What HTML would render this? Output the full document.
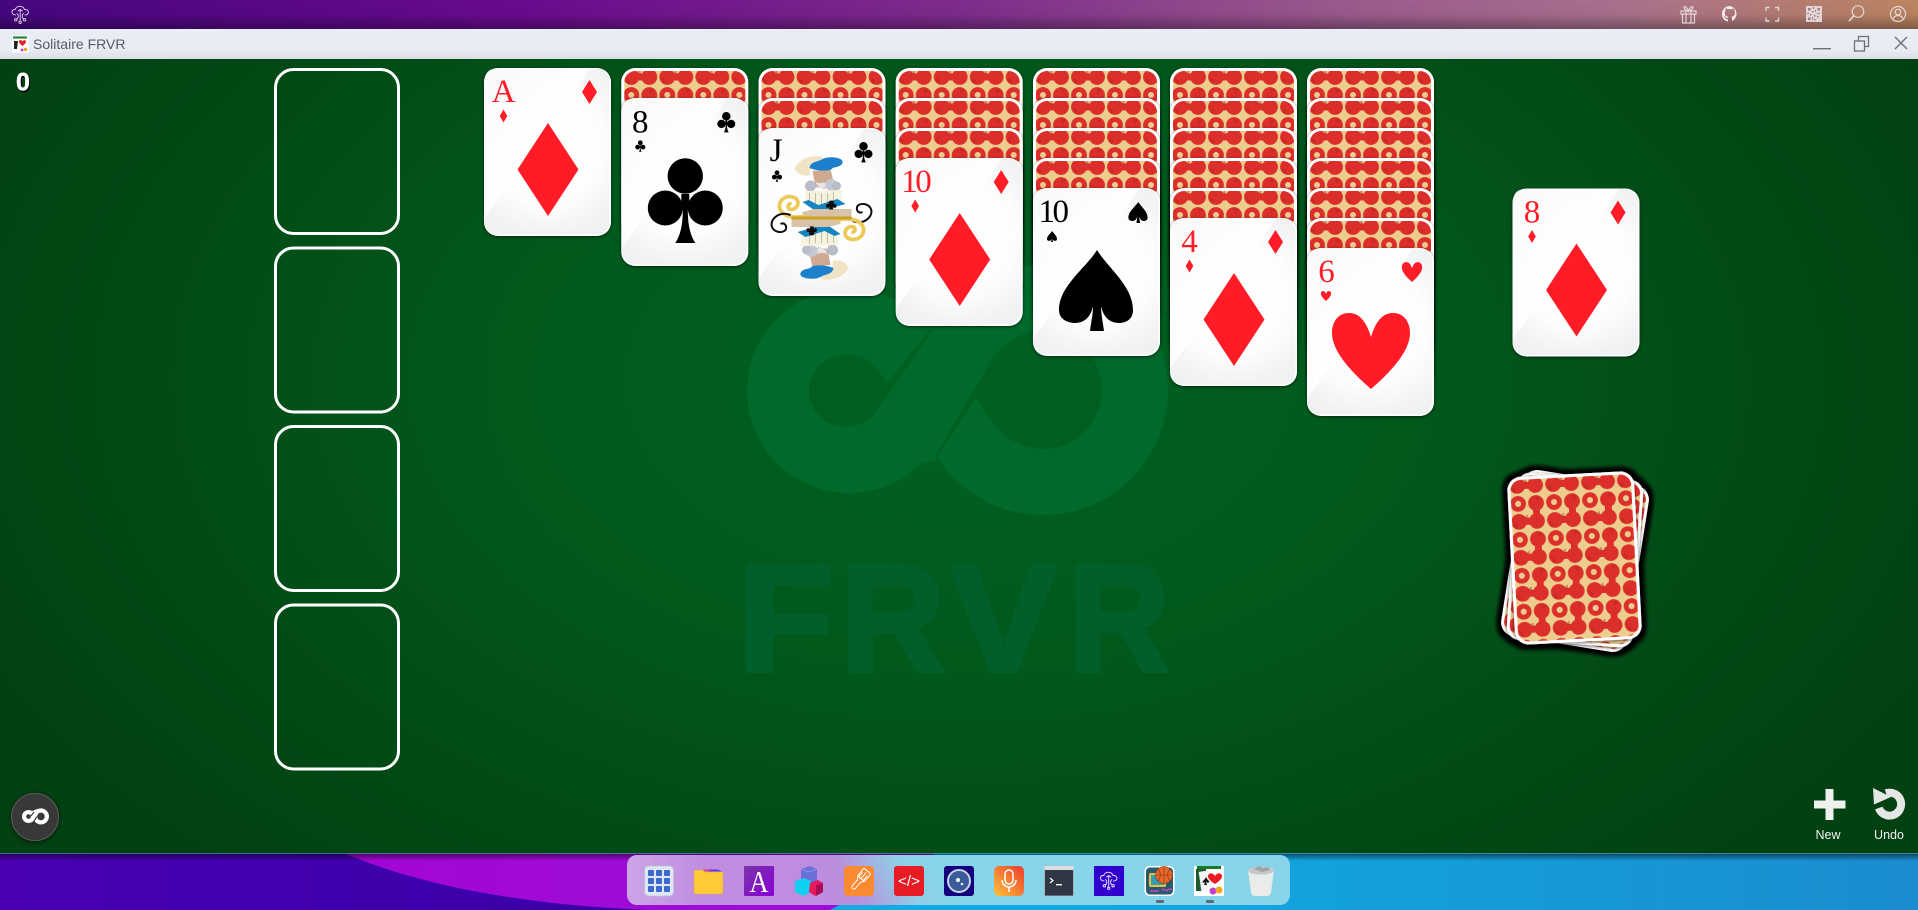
<!DOCTYPE html>
<html><head><meta charset="utf-8"><title>Solitaire FRVR</title>
<style>html,body{margin:0;padding:0;background:#000;overflow:hidden}svg{display:block}text{font-family:"Liberation Sans",sans-serif}</style>
</head><body>
<svg xmlns="http://www.w3.org/2000/svg" width="1918" height="910" viewBox="0 0 1918 910">
<defs>
<radialGradient id="bg" gradientUnits="userSpaceOnUse" cx="960" cy="380" r="1100" gradientTransform="translate(960 380) scale(1 .62) translate(-960 -380)">
<stop offset="0" stop-color="#006123"/><stop offset=".42" stop-color="#01591c"/><stop offset=".72" stop-color="#024b16"/><stop offset="1" stop-color="#034012"/>
</radialGradient>
<linearGradient id="top" x1="0" x2="1" y1="0" y2="0"><stop offset="0" stop-color="#46067f"/><stop offset=".27" stop-color="#6a0a8e"/><stop offset=".5" stop-color="#7e2c8c"/><stop offset=".7" stop-color="#9a5a8c"/><stop offset=".84" stop-color="#a8708e"/><stop offset="1" stop-color="#bc8560"/></linearGradient>
<linearGradient id="topd" x1="0" x2="0" y1="0" y2="1"><stop offset="0" stop-color="#000" stop-opacity="0"/><stop offset=".5" stop-color="#000" stop-opacity=".03"/><stop offset="1" stop-color="#000" stop-opacity=".32"/></linearGradient>
<linearGradient id="title" x1="0" x2="0" y1="0" y2="1"><stop offset="0" stop-color="#e9edf5"/><stop offset=".7" stop-color="#e7ebf3"/><stop offset="1" stop-color="#dcdfe6"/></linearGradient>
<linearGradient id="shd" x1="0" x2="0" y1="0" y2="1"><stop offset="0" stop-color="#000" stop-opacity=".5"/><stop offset="1" stop-color="#000" stop-opacity="0"/></linearGradient>
<linearGradient id="wl" x1="0" x2="1" y1="0" y2="0"><stop offset="0" stop-color="#4a00b2"/><stop offset="1" stop-color="#3800a8"/></linearGradient>
<linearGradient id="wm" x1="0" x2="1" y1="0" y2="0"><stop offset="0" stop-color="#a800d4"/><stop offset="1" stop-color="#9a10d8"/></linearGradient>
<linearGradient id="wr" x1="0" x2="1" y1="0" y2="0"><stop offset="0" stop-color="#08b8e8"/><stop offset=".6" stop-color="#10a8e0"/><stop offset="1" stop-color="#1b8ccf"/></linearGradient>
<linearGradient id="dock" gradientUnits="userSpaceOnUse" x1="830" y1="905" x2="925" y2="855"><stop offset="0" stop-color="#bf8ce0"/><stop offset=".25" stop-color="#b98fdc"/><stop offset=".75" stop-color="#8fcfe6"/><stop offset="1" stop-color="#88d4ea"/></linearGradient>
<linearGradient id="dockl" x1="0" x2="1" y1="0" y2="0"><stop offset="0" stop-color="#fff" stop-opacity=".22"/><stop offset=".12" stop-color="#fff" stop-opacity="0"/></linearGradient>
<radialGradient id="fg" gradientUnits="userSpaceOnUse" cx="62" cy="78" r="105"><stop offset="0" stop-color="#fff"/><stop offset=".55" stop-color="#fdfdfd"/><stop offset=".85" stop-color="#f1f2f4"/><stop offset="1" stop-color="#eef0f2"/></radialGradient>
<linearGradient id="gl" x1="0" x2="1" y1="0" y2="1"><stop offset="0" stop-color="#fafafa"/><stop offset=".5" stop-color="#fff"/></linearGradient>
<linearGradient id="mic" x1="0" x2="1" y1="1" y2="0"><stop offset="0" stop-color="#fdc23a"/><stop offset="1" stop-color="#ee3a2e"/></linearGradient>
<linearGradient id="apur" x1="0" x2="1" y1="0" y2="1"><stop offset="0" stop-color="#7a35a8"/><stop offset="1" stop-color="#8a00d8"/></linearGradient>
<filter id="s" x="-10%" y="-10%" width="120%" height="120%"><feDropShadow dx="0" dy="1" stdDeviation="1.8" flood-color="#000" flood-opacity=".6"/></filter>
<filter id="st" x="-15%" y="-15%" width="130%" height="130%"><feMorphology in="SourceAlpha" operator="dilate" radius="3.500" result="d"/><feGaussianBlur in="d" stdDeviation="2" result="b"/><feMerge><feMergeNode in="b"/><feMergeNode in="b"/><feMergeNode in="SourceGraphic"/></feMerge></filter>
<filter id="bs" x="-30%" y="-30%" width="160%" height="160%"><feDropShadow dx="0" dy="1" stdDeviation="2.5" flood-color="#000" flood-opacity=".6"/></filter>
<pattern id="p" patternUnits="userSpaceOnUse" width="36" height="36" x="1" y="0">
<rect width="36" height="36" fill="#eccd8e"/>
<g fill="#dc2e2a"><circle cx="9" cy="9" r="7.900"/><circle cx="27" cy="9" r="7.900"/><circle cx="9" cy="27" r="7.900"/><circle cx="27" cy="27" r="7.900"/>
<rect x="9" y="5.500" width="18" height="7"/><rect x="23.500" y="27" width="7" height="18"/><rect x="23.500" y="-9" width="7" height="18"/></g>
<g fill="#eccd8e"><circle cx="9" cy="27" r="3"/><circle cx="18" cy="18" r="3.800"/><circle cx="0" cy="0" r="3.800"/><circle cx="36" cy="0" r="3.800"/><circle cx="0" cy="36" r="3.800"/><circle cx="36" cy="36" r="3.800"/></g>
<path d="M3 9l5 4-3 3zM27 20l5 2-4 4zM14 5l4-3 1 5z" fill="#b02420" opacity=".45"/>
</pattern>
<g id="back"><rect width="127" height="168" rx="14" fill="#fff"/><rect x="3" y="3" width="121" height="162" rx="11" fill="url(#p)"/></g>
<g id="face"><rect width="127" height="168" rx="14" fill="#fff"/><rect x=".5" y=".5" width="125" height="166" rx="13.5" fill="url(#fg)"/><path d="M13 .5H106L.5 150V14Q.5 .5 13 .5Z" fill="url(#gl)" opacity=".85"/></g>
<g id="dp" fill="#ff1f26"><polygon points="64,55 94.5,101.5 64,148 33.5,101.5"/><polygon points="105.5,12 113,24 105.5,36 98,24"/><polygon points="19.5,41.5 23.3,48 19.5,54.5 15.7,48"/></g>
<g id="cb"><circle cx="64" cy="78" r="17.700"/><circle cx="44" cy="110" r="17.500"/><circle cx="84" cy="110" r="17.500"/><path d="M60 96H68V112H66.500C66.500 124 68 136 74 145H54C60 136 61.500 124 61.500 112H60Z"/></g>
<g id="cld" fill="none" stroke-linecap="round" stroke-linejoin="round"><path d="M3.500 9.500C1 9.500 -.5 7.500 0 5.800 .5 4.500 1.800 3.800 3.200 4.200 3.800 1.800 6 .6 8.300 .8 10.300 1 11.800 2.200 12.500 4 14.300 3.700 16.200 4.800 16.400 6.600 16.500 8.400 15 9.500 13 9.500"/><path d="M8.200 4.500V15.500M6 5.500 8.200 4 10.500 5.500M5 8 6.200 9.500V12L4.800 13.400M11.400 8 10.200 9.500V12l1.400 1.400"/><circle cx="3.800" cy="14.300" r="1.200"/><circle cx="12.600" cy="14.300" r="1.200"/><circle cx="8.200" cy="16.800" r="1.200"/></g>
</defs>

<!-- desktop top bar -->
<rect width="1918" height="29" fill="url(#top)"/><rect width="1918" height="29" fill="url(#topd)"/>
<use href="#cld" transform="translate(12 5.500)" stroke="#e6d8ee" stroke-width=".9"/>
<g fill="none" stroke="#eadfdf" stroke-width="1.200" opacity=".9">
<path d="M1681 11h15v3h-15zM1682.500 14v9h12v-9M1686 11v12M1691 11v12M1688.500 11c-3-1-5-2-4.500-4 1-1.500 3.500 1 4.500 4 1-3 3.500-5.500 4.500-4 .5 2-1.500 3-4.500 4"/>
<path d="M1766 11V7.500h3.500M1775 7.500h3.500V11M1778.500 17.500V21H1775M1769.500 21H1766V17.500" stroke-width="1.400"/>
<circle cx="1858" cy="11.500" r="5.800"/><path d="M1853.800 15.800 1849 21" stroke-width="1.800"/>
<circle cx="1898" cy="14" r="7.500"/><circle cx="1898" cy="12" r="2.800"/><path d="M1892.800 19.300c1-3 3-3.800 5.200-3.800s4.200.8 5.200 3.800"/>
</g>
<path fill="#f2e8e8" d="M1730 6a8 8 0 0 0-2.600 15.600c.4.100.6-.2.600-.4v-2.200c-2.300.5-2.800-1-2.800-1-.4-.9-.9-1.200-.9-1.200-.7-.5.100-.5.100-.5.800.1 1.200.8 1.200.8.700 1.200 1.900.9 2.400.7.100-.5.300-.9.500-1.100-1.800-.2-3.700-.9-3.700-4 0-.9.300-1.600.8-2.100-.1-.2-.4-1 .1-2.100 0 0 .7-.2 2.200.8a7.500 7.500 0 0 1 4 0c1.500-1 2.200-.8 2.200-.8.500 1.100.2 1.900.1 2.100.5.500.8 1.200.8 2.100 0 3.100-1.900 3.800-3.700 4 .3.300.6.700.6 1.500v2.200c0 .2.100.5.600.4A8 8 0 0 0 1730 6Z"/>
<rect x="1806" y="6" width="16" height="16" fill="#e2d4d6"/>
<path fill="#9a7c7c" d="M1808 8h2.500v2.500h-2.500zM1817.500 8h2.500v2.500h-2.500zM1808 17.500h2.500v2.500h-2.500zM1813 7h1v2h-1zM1815 10h1v2h-1zM1812 11h1.500v1.500h-1.500zM1807 13h2v1h-2zM1810 14h1.500v1.500h-1.500zM1814 15h1.500v1.500h-1.500zM1817 13h2.500v1h-2.500zM1817 16h1.500v1.500h-1.500zM1814 19h1.500v1.500h-1.500zM1812 17h1v2.500h-1z"/>

<!-- title bar -->
<rect y="29" width="1918" height="30" fill="url(#title)"/>
<rect x="12" y="36" width="16.500" height="16.500" rx="1.500" fill="#fff"/><rect x="13" y="36.500" width="14" height="2" fill="#1a7a2a"/>
<path d="M14 41h4l-1 8h-3z" fill="#222"/><path d="M22.500 46c-3-2.500-3.500-3.500-3.500-4.500 0-1.500 2.500-2 3.500 0 1-2 3.500-1.500 3.500 0 0 1-.5 2-3.500 4.500Z" fill="#e81c24"/><circle cx="22" cy="50" r="1.500" fill="#d040d0"/><circle cx="25.500" cy="49.500" r="1.700" fill="#f0a020"/>
<text x="33" y="49" font-size="14" fill="#565b68" textLength="92.500" lengthAdjust="spacingAndGlyphs">Solitaire FRVR</text>
<rect x="1813" y="48" width="18" height="1.400" fill="#6c7078"/>
<g fill="none" stroke="#6c7078" stroke-width="1.300"><rect x="1854.500" y="41" width="10" height="10"/><path d="M1858.500 41V36.500h10v10h-4"/><path d="M1895 37 1907 49M1907 37 1895 49" stroke-width="1.400"/></g>

<!-- table -->
<rect y="59" width="1918" height="794.500" fill="url(#bg)"/>
<!-- watermark -->
<g fill="#006a2d"><circle cx="849" cy="391" r="102"/><circle cx="1043" cy="390" r="125"/><polygon points="905,306 990,272 1043,300 1043,390 936,460 880,470"/></g>
<g fill="url(#bg)">
<path d="M930 329 887 383C878 368 868 355 849 355A36 36 0 1 0 849 426.500C860 426 868 422 875 414L932 331Z"/>
<path d="M935 456 990 362C1002 343 1020 331 1043 331A59 59 0 1 1 1043 449C1012 449 992 427 976 398L937 458Z"/>
</g>
<g fill="#005f2b" stroke="#005f2b" stroke-width="4" font-weight="700" font-size="152">
<text x="737.600" y="671" textLength="96.600" lengthAdjust="spacingAndGlyphs">F</text>
<text x="840.500" y="671" textLength="104.500" lengthAdjust="spacingAndGlyphs">R</text>
<text x="950" y="671" textLength="107" lengthAdjust="spacingAndGlyphs">V</text>
<text x="1068" y="671" textLength="102" lengthAdjust="spacingAndGlyphs">R</text>
</g>

<!-- score -->
<text x="16" y="90.500" font-size="25" font-weight="700" fill="#000" stroke="#000" stroke-width=".5" transform="translate(1 1.300)">0</text>
<text x="16" y="90.500" font-size="25" font-weight="700" fill="#fff" stroke="#fff" stroke-width=".5">0</text>

<!-- foundation slots -->
<g fill="none" stroke="#fff" stroke-width="3">
<rect x="275.500" y="69.500" width="123" height="164" rx="18"/>
<rect x="275.500" y="248" width="123" height="164" rx="18"/>
<rect x="275.500" y="426.500" width="123" height="164" rx="18"/>
<rect x="275.500" y="605" width="123" height="164" rx="18"/>
</g>

<!-- col1 -->
<g transform="translate(484 68)" filter="url(#s)"><use href="#face"/><use href="#dp"/><text x="19.500" y="34" font-size="33" fill="#ff1f26" text-anchor="middle" style="font-family:'Liberation Serif',serif">A</text></g>

<!-- col2 -->
<use href="#back" x="621.300" y="68" filter="url(#s)"/>
<g transform="translate(621.300 98)" filter="url(#s)"><use href="#face"/>
<use href="#cb" fill="#000"/>
<use href="#cb" fill="#000" transform="translate(105 24) scale(.24) translate(-64 -102)"/>
<use href="#cb" fill="#000" transform="translate(19 48) scale(.135) translate(-64 -102)"/>
<text x="19" y="34.700" font-size="33" fill="#000" text-anchor="middle" style="font-family:'Liberation Serif',serif">8</text></g>

<!-- col3 -->
<use href="#back" x="758.500" y="68" filter="url(#s)"/><use href="#back" x="758.500" y="98" filter="url(#s)"/>
<g transform="translate(758.500 128)" filter="url(#s)"><use href="#face"/>
<use href="#cb" fill="#000" transform="translate(105 24) scale(.24) translate(-64 -102)"/>
<use href="#cb" fill="#000" transform="translate(18.500 48) scale(.135) translate(-64 -102)"/>
<text x="17.500" y="33" font-size="33" fill="#000" text-anchor="middle" style="font-family:'Liberation Serif',serif">J</text>
<!-- jack art: half + rotated half -->
<g id="jh">
<path d="M64 29C52 26 40 32 36 40 38 46 46 49 52 47 50 40 56 34 64 32Z" fill="#f0e4c4"/>
<path d="M54 43 72 41 75 54 66 61 57 59Z" fill="#d0aa90"/>
<path d="M51 40C52 33 60 34 64 31 70 28 82 29 84 33 85 38 78 39 74 40 74 43 60 44 51 40Z" fill="#1b80cc"/>
<path d="M57 53C60 58 66 52 70 56 66 62 60 63 57 53Z" fill="#e4e4e8"/>
<circle cx="52" cy="58" r="5.500" fill="#b8bcc8"/><circle cx="73" cy="57" r="6" fill="#c4c8d4"/><circle cx="78" cy="58" r="4.500" fill="#b8bcc8"/>
<path d="M46 63 84 62 82 76 62 79 48 75Z" fill="#f6f2e0"/>
<path d="M51 65V74M57 65V76M63 65V77M69 65V76M75 64V74" stroke="#c0bca4" stroke-width="1"/>
<path d="M44 74 60 85 76 79 87 76 79 71 60 77 50 72Z" fill="#1484c0"/>
<path d="M56 81H93V88.500H44V84Z" fill="#d8c3a8"/>
<path d="M73 72.500c2.500 0 3 2 2 3.500 2-.5 3.500 1 3 2.500-.5 2-3 1.500-4 .5l1 2.500h-4.500l1-2.500c-1 1-3.500 1.500-4-.5-.5-1.500 1-3 3-2.500-1-1.500-.5-3.500 2.500-3.500Z" fill="#111"/>
<path d="M48 88C30 92 20 85 21 77 22 69 32 66 38 71 42 76 37 83 31 81 28 79 30 75 33 76" fill="none" stroke="#edc95a" stroke-width="3.800"/>
<path d="M94 93C105 97 113 90 113 83 112 76 103 74 99 78 97 82 100 86 104 84" fill="none" stroke="#111" stroke-width="2"/>
</g>
<use href="#jh" transform="rotate(180 63 90)"/>
<rect x="33" y="88.500" width="60" height="3" fill="#c9a020"/></g>

<!-- col4 -->
<use href="#back" x="895.700" y="68" filter="url(#s)"/><use href="#back" x="895.700" y="98" filter="url(#s)"/><use href="#back" x="895.700" y="128" filter="url(#s)"/>
<g transform="translate(895.700 158)" filter="url(#s)"><use href="#face"/><use href="#dp"/><text x="19.500" y="34" font-size="33" letter-spacing="-2.500" fill="#ff1f26" text-anchor="middle" style="font-family:'Liberation Serif',serif">10</text></g>

<!-- col5 -->
<use href="#back" x="1033" y="68" filter="url(#s)"/><use href="#back" x="1033" y="98" filter="url(#s)"/><use href="#back" x="1033" y="128" filter="url(#s)"/><use href="#back" x="1033" y="158" filter="url(#s)"/>
<g transform="translate(1033 188)" filter="url(#s)"><use href="#face"/>
<path fill="#000" d="M64 62C75 80 100 98 100 122 100 132 92 135 86 135 76 135 70 128 68 118 68 126 70 135 71 143H57C58 135 60 126 60 118 58 128 52 135 42 135 36 135 26 132 26 122 26 98 53 80 64 62Z"/>
<path fill="#000" transform="translate(105 24.500) scale(.26) translate(-63 -102.500)" d="M64 62C75 80 100 98 100 122 100 132 92 135 86 135 76 135 70 128 68 118 68 126 70 135 71 143H57C58 135 60 126 60 118 58 128 52 135 42 135 36 135 26 132 26 122 26 98 53 80 64 62Z"/>
<path fill="#000" transform="translate(19 48.500) scale(.135) translate(-63 -102.500)" d="M64 62C75 80 100 98 100 122 100 132 92 135 86 135 76 135 70 128 68 118 68 126 70 135 71 143H57C58 135 60 126 60 118 58 128 52 135 42 135 36 135 26 132 26 122 26 98 53 80 64 62Z"/>
<text x="19.500" y="34" font-size="33" letter-spacing="-2.500" fill="#000" text-anchor="middle" style="font-family:'Liberation Serif',serif">10</text></g>

<!-- col6 -->
<use href="#back" x="1170" y="68" filter="url(#s)"/><use href="#back" x="1170" y="98" filter="url(#s)"/><use href="#back" x="1170" y="128" filter="url(#s)"/><use href="#back" x="1170" y="158" filter="url(#s)"/><use href="#back" x="1170" y="188" filter="url(#s)"/>
<g transform="translate(1170 218)" filter="url(#s)"><use href="#face"/><use href="#dp"/><text x="19.500" y="34" font-size="33" fill="#ff1f26" text-anchor="middle" style="font-family:'Liberation Serif',serif">4</text></g>

<!-- col7 -->
<use href="#back" x="1307" y="68" filter="url(#s)"/><use href="#back" x="1307" y="98" filter="url(#s)"/><use href="#back" x="1307" y="128" filter="url(#s)"/><use href="#back" x="1307" y="158" filter="url(#s)"/><use href="#back" x="1307" y="188" filter="url(#s)"/><use href="#back" x="1307" y="218" filter="url(#s)"/>
<g transform="translate(1307 248)" filter="url(#s)"><use href="#face"/>
<path fill="#ff1f26" d="M64 89C68 76 74 65 86 65 97 65 103 74 103 85 103 105 80 127 64 141 48 127 25 105 25 85 25 74 31 65 42 65 54 65 60 76 64 89Z"/>
<path fill="#ff1f26" transform="translate(105 24) scale(.26) translate(-64 -103)" d="M64 89C68 76 74 65 86 65 97 65 103 74 103 85 103 105 80 127 64 141 48 127 25 105 25 85 25 74 31 65 42 65 54 65 60 76 64 89Z"/>
<path fill="#ff1f26" transform="translate(19 48) scale(.13) translate(-64 -103)" d="M64 89C68 76 74 65 86 65 97 65 103 74 103 85 103 105 80 127 64 141 48 127 25 105 25 85 25 74 31 65 42 65 54 65 60 76 64 89Z"/>
<text x="19.500" y="34" font-size="33" fill="#ff1f26" text-anchor="middle" style="font-family:'Liberation Serif',serif">6</text></g>

<!-- waste -->
<g transform="translate(1512.500 188.500)" filter="url(#s)"><use href="#face"/><use href="#dp"/><text x="19.500" y="34" font-size="33" fill="#ff1f26" text-anchor="middle" style="font-family:'Liberation Serif',serif">8</text></g>

<!-- stock -->
<g filter="url(#st)">
<use href="#back" transform="translate(1575 561) rotate(9) translate(-63.500 -84)"/>
<use href="#back" transform="translate(1575 560) rotate(4) translate(-63.500 -84)" filter="url(#s)"/>
<use href="#back" transform="translate(1574.500 558) rotate(-3) translate(-63.500 -84)" filter="url(#s)"/>
</g>

<!-- bottom right buttons -->
<g fill="#eef1ee">
<path d="M1825.500 789h8v11.500h12v8h-12v11.500h-8v-11.500h-11.500v-8h11.500z"/>
<path d="M1873 788 1874 804.500 1891 797Z" fill="#e4e8e4"/>
</g>
<path d="M1886 793.200A11.500 11.500 0 1 1 1878.800 808" fill="none" stroke="#e4e8e4" stroke-width="8"/>
<text x="1828" y="839" font-size="12.500" fill="#f0f2f0" text-anchor="middle">New</text>
<text x="1889" y="839" font-size="12.500" fill="#f0f2f0" text-anchor="middle">Undo</text>

<!-- bottom left button -->
<circle cx="35" cy="817" r="23.500" fill="#383838" stroke="#5a5a5a" stroke-width="1" filter="url(#bs)"/>
<g transform="translate(22 816.500) scale(.064) translate(-747 -391)">
<g fill="#fff"><circle cx="849" cy="391" r="102"/><circle cx="1043" cy="390" r="125"/><polygon points="905,306 990,272 1043,300 1043,390 936,460 880,470"/></g>
<g fill="#383838" stroke="#383838"><path stroke-width="18" fill="none" d="M935 320 887 383M980 392 934 462"/><circle cx="849" cy="391" r="36"/><circle cx="1043" cy="390" r="59"/></g>
</g>

<!-- desktop bottom wallpaper -->
<rect y="853.500" width="1918" height="56.500" fill="url(#wr)"/>
<path d="M0 853.500H935L830 910H0Z" fill="url(#wm)"/>
<path d="M0 853.500H345C420 885 520 905 650 910H0Z" fill="url(#wl)"/>
<rect y="853" width="1918" height="1" fill="#4aa0c0" opacity=".6"/>
<rect y="854" width="1918" height="7" fill="url(#shd)"/>

<!-- dock -->
<rect x="627" y="855" width="663" height="50" rx="10" fill="url(#dock)"/>
<rect x="627" y="855" width="663" height="50" rx="10" fill="url(#dockl)"/>

<!-- launcher -->
<rect x="644.500" y="866" width="29" height="30" rx="4" fill="#dfe6f5" stroke="#b8c0d4" stroke-width=".8"/>
<g fill="#3a6ad0"><rect x="648" y="870" width="6" height="6" rx="1"/><rect x="656" y="870" width="6" height="6" rx="1"/><rect x="664" y="870" width="6" height="6" rx="1"/><rect x="648" y="878" width="6" height="6" rx="1"/><rect x="656" y="878" width="6" height="6" rx="1"/><rect x="664" y="878" width="6" height="6" rx="1"/><rect x="648" y="886" width="6" height="6" rx="1"/><rect x="656" y="886" width="6" height="6" rx="1"/><rect x="664" y="886" width="6" height="6" rx="1"/></g>
<!-- folder -->
<path d="M702 869.500h14l3 2h-16z" fill="#d8409a"/><path d="M709 869.500h9l4 2h-12z" fill="#6a3ad8"/>
<path d="M723 872 723 892q0 2-2 2H696q-2 0-2-2V872q0-2 2-2h7l2 2Z" fill="#ffca38" stroke="#d8a860" stroke-width=".6"/>
<!-- A -->
<rect x="744" y="866" width="30" height="30" rx="1" fill="url(#apur)"/>
<text x="749.500" y="892" font-size="31" fill="#fff" textLength="19" lengthAdjust="spacingAndGlyphs" style="font-family:'Liberation Serif',serif">A</text>
<!-- cubes -->
<path d="M801 869 810 866 817 869V881L808 884 801 881Z" fill="#6a70d8"/><path d="M801 869 808 872 817 869" fill="none" stroke="#8a90e8"/>
<path d="M795 881 804 878 811 881V892L803 896 795 892Z" fill="#10d0f0"/><path d="M810 883 818 880 823 883V892L815 896 809 892Z" fill="#e8185c"/><path d="M816 885 823 883V892L816 896Z" fill="#a80c50"/>
<!-- brush -->
<rect x="844" y="866" width="30" height="30" rx="4" fill="#f98a30"/>
<g fill="none" stroke="#fff" stroke-width="1" transform="rotate(40 859 881)"><rect x="854.500" y="868" width="9" height="10" rx="1"/><path d="M856 872v6M859 870v8M862 872v6M855 878h8l-2 3v8a2 2 0 0 1-4 0v-8Z"/></g>
<!-- code -->
<rect x="894" y="866" width="30" height="30" rx="3" fill="#e81c24"/>
<text x="898" y="886" font-size="15" fill="#fff" textLength="22" lengthAdjust="spacingAndGlyphs">&lt;/&gt;</text>
<!-- camera -->
<rect x="944" y="866" width="30" height="30" rx="3" fill="#14007e"/>
<circle cx="959" cy="881" r="11" fill="#3a5a9a" stroke="#c8d4e8" stroke-width="2"/><circle cx="958" cy="880" r="2" fill="#fff"/><circle cx="962" cy="884" r="1.300" fill="#e0e8f4"/>
<!-- mic -->
<rect x="994" y="866" width="30" height="30" rx="5" fill="url(#mic)"/>
<g fill="none" stroke="#fff" stroke-width="1.500"><rect x="1005" y="870" width="8" height="14" rx="4"/><path d="M1002 880a7 7 0 0 0 14 0M1009 887v5"/></g>
<!-- terminal -->
<rect x="1044.500" y="866" width="29" height="30" fill="#2f3744" stroke="#b8bcc4" stroke-width=".8"/><rect x="1044.500" y="866" width="29" height="4" fill="#dadee6"/>
<path d="M1050 878l3 2.500-3 2.500" fill="none" stroke="#fff" stroke-width="1.200"/><rect x="1056" y="884" width="6" height="1.400" fill="#fff"/>
<!-- cloud app -->
<rect x="1094" y="866" width="30" height="30" fill="#3200cc"/>
<use href="#cld" transform="translate(1100.500 871.500)" stroke="#e6e0ff" stroke-width="1"/>
<!-- basketball app -->
<rect x="1144.500" y="866" width="30" height="30" rx="5" fill="#fff"/><rect x="1146" y="867.500" width="27" height="27" rx="4" fill="#2a5a70"/>
<rect x="1149" y="873" width="17" height="14" rx="2" fill="#e8c040"/><rect x="1151" y="875" width="13" height="10" fill="#30a0b0"/>
<circle cx="1164" cy="875" r="8.500" fill="#e8682c" stroke="#8a3a18" stroke-width=".6"/><path d="M1156 875h17M1164 867v17M1158 869c3 3 3 9 0 12M1170 869c-3 3-3 9 0 12" fill="none" stroke="#7a3010" stroke-width=".6"/>
<path d="M1150 891h9M1162 890c2-2 4 2 6 0s3-1 4 0" fill="none" stroke="#d040c0" stroke-width="1.400"/>
<rect x="1156" y="900" width="8" height="3" rx="1" fill="#5a6a78"/>
<!-- solitaire app -->
<rect x="1194" y="866" width="30" height="30" fill="#fff"/><rect x="1197" y="866" width="24" height="3" fill="#1a7a2a"/>
<path d="M1196 869h10l1 22h-11Z" fill="#1e5a30"/><rect x="1200" y="871" width="13" height="20" fill="#f4f4f4" transform="rotate(-8 1206 881)"/><path d="M1203 881c3-3 3-4 3-5 0 1 0 2 3 5 .8 2-2 2-3 1l1 3h-3l1-3c-1 1-3.800 1-2-1Z" fill="#111"/>
<path d="M1215 884c-6-4-7-6-7-8 0-3 5-4 7 0 2-4 7-3 7 0 0 2-1 4-7 8Z" fill="#e81c24"/>
<circle cx="1213" cy="891" r="3.500" fill="#c040d0"/><circle cx="1219" cy="890" r="3.500" fill="#f0a820"/>
<rect x="1206" y="900" width="8" height="3" rx="1" fill="#5a6a78"/>
<!-- trash -->
<path d="M1248 870h26l-3 22q-.5 4-4 4h-12q-3.500 0-4-4Z" fill="#eaecea"/><ellipse cx="1261" cy="870.500" rx="13" ry="4" fill="#c4c8c8"/><path d="M1254 869l5-3 4 2 5-1 2 3-8 2Z" fill="#a0a4a4"/>
</svg>
</body></html>
